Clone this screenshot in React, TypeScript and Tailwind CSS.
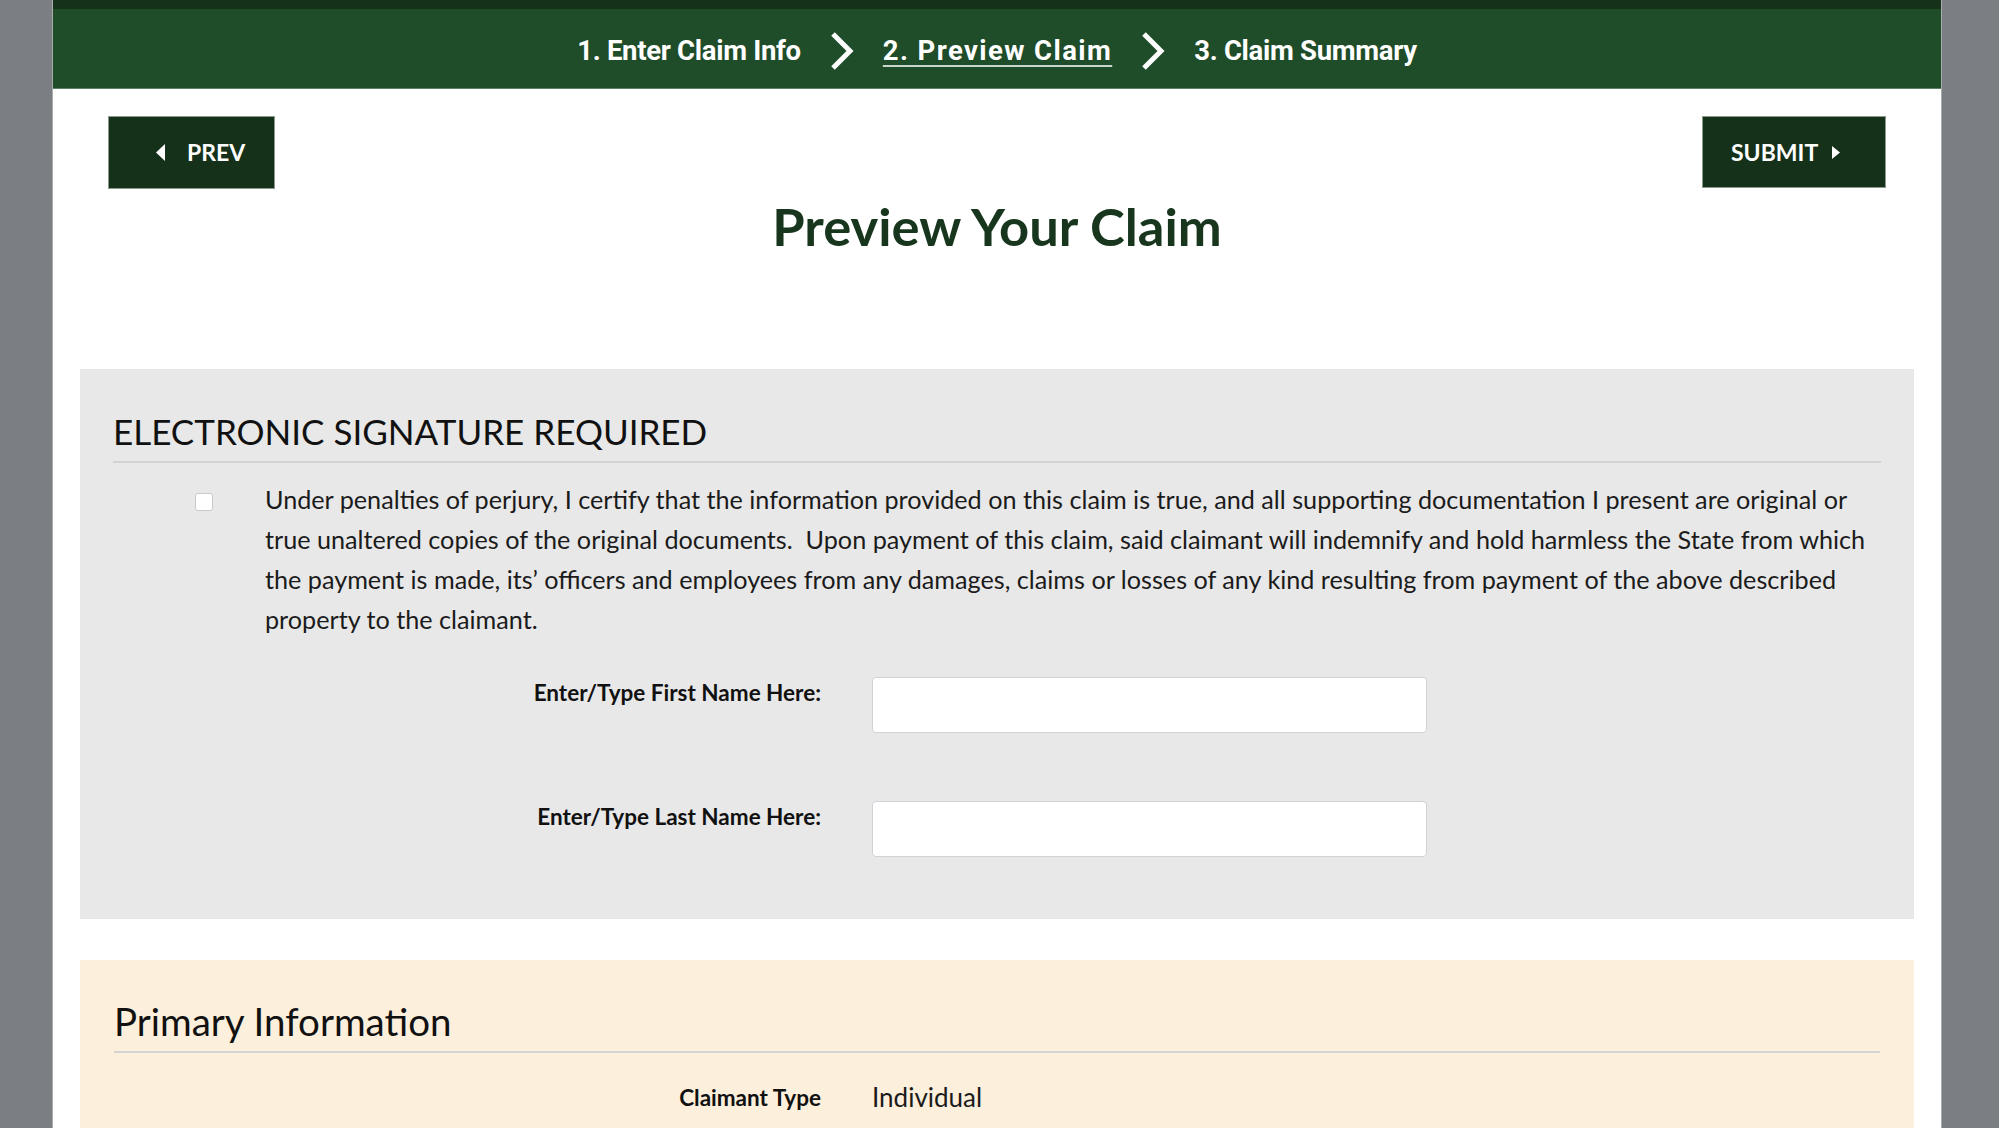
// Breadcrumb steps shown in the green bar
const STEPS = [
    { label: "1. Enter Claim Info", active: false },
    { label: "2. Preview Claim", active: true },
    { label: "3. Claim Summary", active: false },
]

const CERTIFY_TEXT =
    "Under penalties of perjury, I certify that the information provided on this claim is true, and all supporting documentation I present are original or true unaltered copies of the original documents.\u00a0 Upon payment of this claim, said claimant will indemnify and hold harmless the State from which the payment is made, its\u2019 officers and employees from any damages, claims or losses of any kind resulting from payment of the above described property to the claimant."

function Caret({ dir }: { dir: "left" | "right" }) {
    return (
        <svg width="9" height="17" viewBox="0 0 9 17" className="shrink-0">
            {dir === "left" ? (
                <path d="M9 0 L0 8.5 L9 17 Z" fill="#ffffff" />
            ) : (
                <path d="M0 0 L9 8.5 L0 17 Z" fill="#ffffff" />
            )}
        </svg>
    )
}

function StepBar() {
    return (
        <div className="h-[80px] pt-[5px] bg-[#1f4c29] border-b border-[#5f8067] flex items-center justify-center gap-[29px] font-['Roboto',sans-serif] font-bold text-[27.5px] text-white tracking-[-0.3px]">
            {STEPS.map((step, i) => (
                <div key={step.label} className="flex items-center gap-[29px]">
                    <span
                        className={
                            step.active
                                ? "tracking-[1.4px] underline underline-offset-[5px] decoration-2 decoration-[#c9d6cc]"
                                : ""
                        }
                    >
                        {step.label}
                    </span>
                    {i < STEPS.length - 1 && (
                        <svg width="24" height="38" viewBox="0 0 24 38">
                            <path d="M3 2 L20 19 L3 36" fill="none" stroke="#ffffff" strokeWidth="5" />
                        </svg>
                    )}
                </div>
            ))}
        </div>
    )
}

function FieldRow({ label }: { label: string }) {
    return (
        <div className="flex items-start">
            <div className="w-[759px] shrink-0 pr-[51px] pt-[1px] text-right font-bold text-[22.5px] leading-[30px] text-[#111]">
                {label}
            </div>
            <input
                type="text"
                className="w-[555px] h-[56px] bg-white border border-[#cfd3d8] rounded-[4px] outline-none px-3 text-[20px]"
            />
        </div>
    )
}

export default function App() {
    return (
        <div className="w-full h-[1128px] overflow-hidden bg-[#7b7e82] font-['Lato',sans-serif]">
            <div className="ml-[52px] w-[1890px] h-full bg-white border-x border-[#a9abad]">
                <div className="h-[9px] bg-[#16311a]" />
                <StepBar />

                <div className="px-[55px] pt-[27px] flex justify-between">
                    <button className="w-[167px] h-[73px] bg-[#16311a] border border-[#8a9a8c] flex items-center pl-[47px] gap-[22px] text-white font-bold text-[23px]">
                        <Caret dir="left" />
                        <span>PREV</span>
                    </button>
                    <button className="w-[184px] h-[72px] bg-[#16311a] border border-[#8a9a8c] flex items-center pl-[28px] gap-[14px] text-white font-bold text-[23px]">
                        <span>SUBMIT</span>
                        <svg width="8" height="13" viewBox="0 0 8 13" className="shrink-0">
                            <path d="M0 0 L8 6.5 L0 13 Z" fill="#ffffff" />
                        </svg>
                    </button>
                </div>

                <h1 className="text-center font-bold text-[52.5px] leading-[64px] text-[#17361d] mt-[5px]">
                    Preview Your Claim
                </h1>

                {/* Electronic signature */}
                <section className="mx-[27px] mt-[111px] h-[550px] bg-[#e8e8e8] px-[33px] pt-[41px]">
                    <h2 className="text-[35px] leading-[42px] text-[#111] pb-[9px] border-b-2 border-[#d2d2d2]">
                        ELECTRONIC SIGNATURE REQUIRED
                    </h2>
                    <div className="flex items-start mt-[16px]">
                        <div className="w-[152px] shrink-0 pl-[82px] pt-[14px]">
                            <div className="w-[18px] h-[18px] bg-white border border-[#c9c9c9] rounded-[3px]" />
                        </div>
                        <p className="text-[25.2px] leading-[40px] text-[#1b1b1b]">{CERTIFY_TEXT}</p>
                    </div>
                    <div className="flex flex-col gap-[68px] mt-[38px]">
                        <FieldRow label="Enter/Type First Name Here:" />
                        <FieldRow label="Enter/Type Last Name Here:" />
                    </div>
                </section>

                {/* Primary information */}
                <section className="mx-[27px] mt-[41px] h-[300px] bg-[#fcefdb] px-[34px] pt-[40px]">
                    <h2 className="text-[38.5px] leading-[42px] text-[#111] pb-[9px] border-b-2 border-[#d3d3d3]">
                        Primary Information
                    </h2>
                    <div className="flex items-center mt-[25px]">
                        <div className="w-[758px] shrink-0 pr-[51px] text-right font-bold text-[22.5px] text-[#111]">
                            Claimant Type
                        </div>
                        <div className="text-[26px] text-[#1b1b1b]">Individual</div>
                    </div>
                </section>
            </div>
        </div>
    )
}
